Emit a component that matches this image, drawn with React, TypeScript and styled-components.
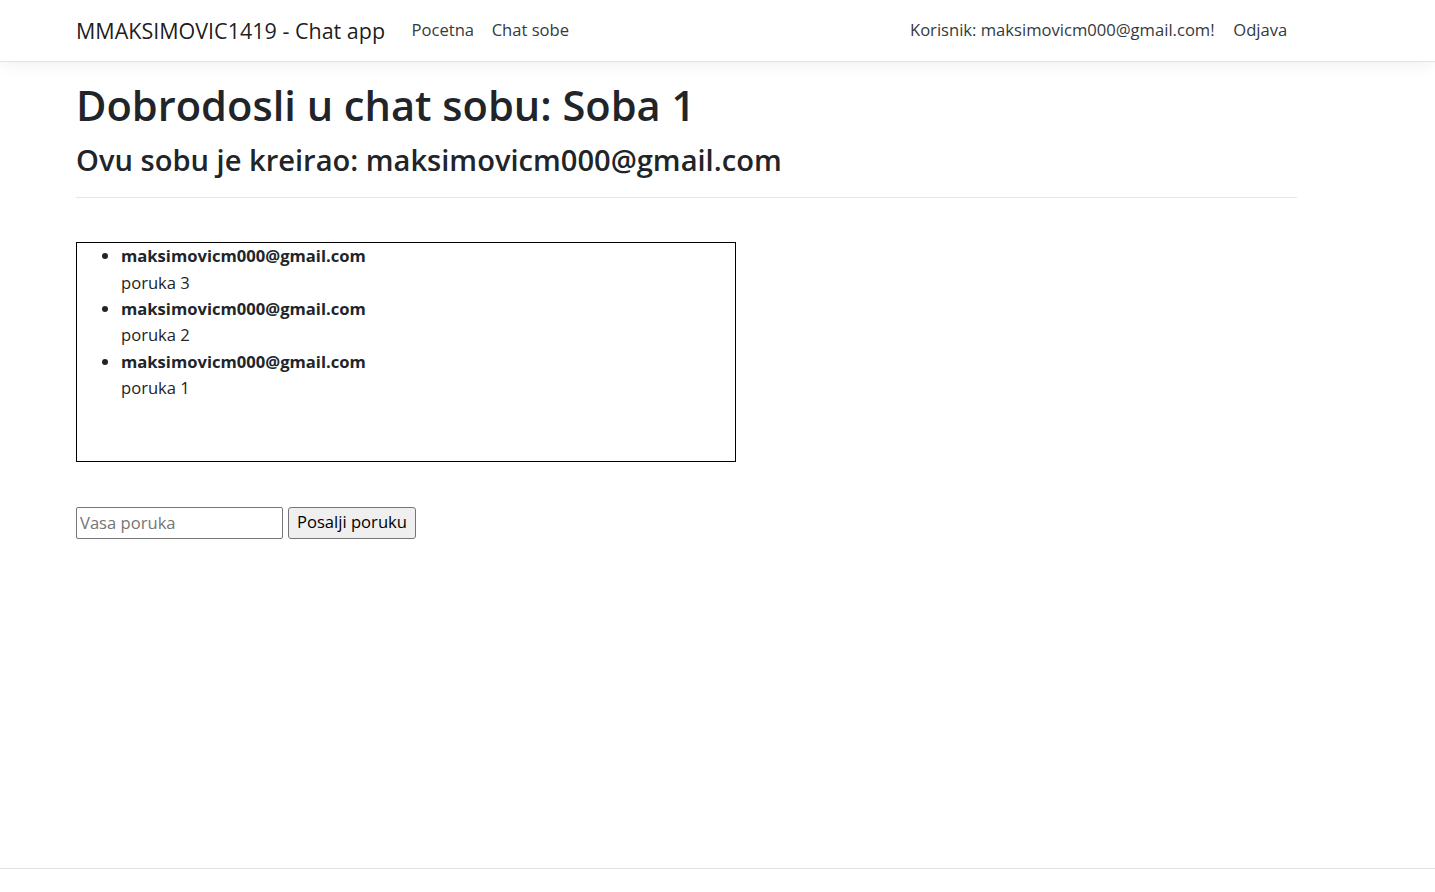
import React from "react";
import styled, { createGlobalStyle } from "styled-components";

const Global = createGlobalStyle`
  html, body { margin: 0; padding: 0; }
  body {
    font-family: "Open Sans", "Noto Sans", "Liberation Sans", sans-serif;
    font-size: 16.6px;
    line-height: 26.4px;
    color: #212529;
    background: #fff;
  }
  * { box-sizing: border-box; }
`;

const Page = styled.div`
  min-height: 100vh;
  display: flex;
  flex-direction: column;
`;

const Navbar = styled.header`
  height: 62px;
  background: #fff;
  border-bottom: 1px solid #dee2e6;
  box-shadow: 0 4.4px 13.2px rgba(0, 0, 0, 0.05);
`;

const Container = styled.div`
  width: 1221px;
  margin-left: 76px;
`;

const NavInner = styled(Container)`
  height: 61px;
  display: flex;
  align-items: center;
`;

const Brand = styled.a`
  font-size: 21.5px;
  line-height: 33px;
  color: rgba(0, 0, 0, 0.9);
  text-decoration: none;
  margin-right: 17.6px;
  white-space: nowrap;
`;

const NavList = styled.nav<{ $right?: boolean }>`
  display: flex;
  align-items: center;
  margin-left: ${(p) => (p.$right ? "auto" : "0")};
  margin-right: ${(p) => (p.$right ? "1px" : "0")};
`;

const NavLink = styled.a<{ $gap?: number }>`
  padding: 8.8px;
  margin-left: ${(p) => p.$gap ?? 0}px;
  color: #343a40;
  text-decoration: none;
  white-space: nowrap;
`;

const Main = styled(Container)`
  flex: 1;
  padding-top: 17px;
`;

const Title = styled.h1`
  margin: 0 0 8.3px;
  font-size: 41.6px;
  line-height: 52.8px;
  font-weight: 600;
`;

const Subtitle = styled.h3`
  margin: 0;
  font-size: 29.1px;
  line-height: 40px;
  font-weight: 600;
`;

const Rule = styled.hr`
  margin: 17px 0 44px;
  border: 0;
  border-top: 1px solid rgba(0, 0, 0, 0.1);
`;

const ChatBox = styled.div`
  width: 660px;
  height: 220px;
  border: 1px solid #000;
  overflow: auto;
`;

const MessageList = styled.ul`
  margin: 0;
  padding-left: 44px;
`;

const Author = styled.b`
  font-weight: 700;
`;

const MessageForm = styled.form`
  display: flex;
  gap: 5px;
  margin-top: 45px;
`;

const Input = styled.input`
  width: 207px;
  height: 32px;
  padding: 0 3px 1px;
  border: 1px solid #767676;
  border-radius: 2px;
  font: inherit;
  color: #212529;
  &::placeholder { color: #757575; }
`;

const Button = styled.button`
  height: 32px;
  padding: 0 8px 1px;
  border: 1px solid #767676;
  border-radius: 3px;
  background: #efefef;
  font: inherit;
  color: #000;
`;

const Footer = styled.footer`
  height: 24px;
  border-top: 1px solid #dee2e6;
`;

const messages = [
  { author: "maksimovicm000@gmail.com", text: "poruka 3" },
  { author: "maksimovicm000@gmail.com", text: "poruka 2" },
  { author: "maksimovicm000@gmail.com", text: "poruka 1" },
];

export default function App() {
  return (
    <Page>
      <Global />
      <Navbar>
        <NavInner>
          <Brand href="#">MMAKSIMOVIC1419 - Chat app</Brand>
          <NavList>
            <NavLink href="#">Pocetna</NavLink>
            <NavLink href="#">Chat sobe</NavLink>
          </NavList>
          <NavList $right>
            <NavLink href="#">Korisnik: maksimovicm000@gmail.com!</NavLink>
            <NavLink href="#" $gap={1}>Odjava</NavLink>
          </NavList>
        </NavInner>
      </Navbar>
      <Main>
        <Title>Dobrodosli u chat sobu: Soba 1</Title>
        <Subtitle>Ovu sobu je kreirao: maksimovicm000@gmail.com</Subtitle>
        <Rule />
        <ChatBox>
          <MessageList>
            {messages.map((m, i) => (
              <li key={i}>
                <Author>{m.author}</Author>
                <br />
                {m.text}
              </li>
            ))}
          </MessageList>
        </ChatBox>
        <MessageForm onSubmit={(e) => e.preventDefault()}>
          <Input placeholder="Vasa poruka" />
          <Button type="submit">Posalji poruku</Button>
        </MessageForm>
      </Main>
      <Footer />
    </Page>
  );
}
